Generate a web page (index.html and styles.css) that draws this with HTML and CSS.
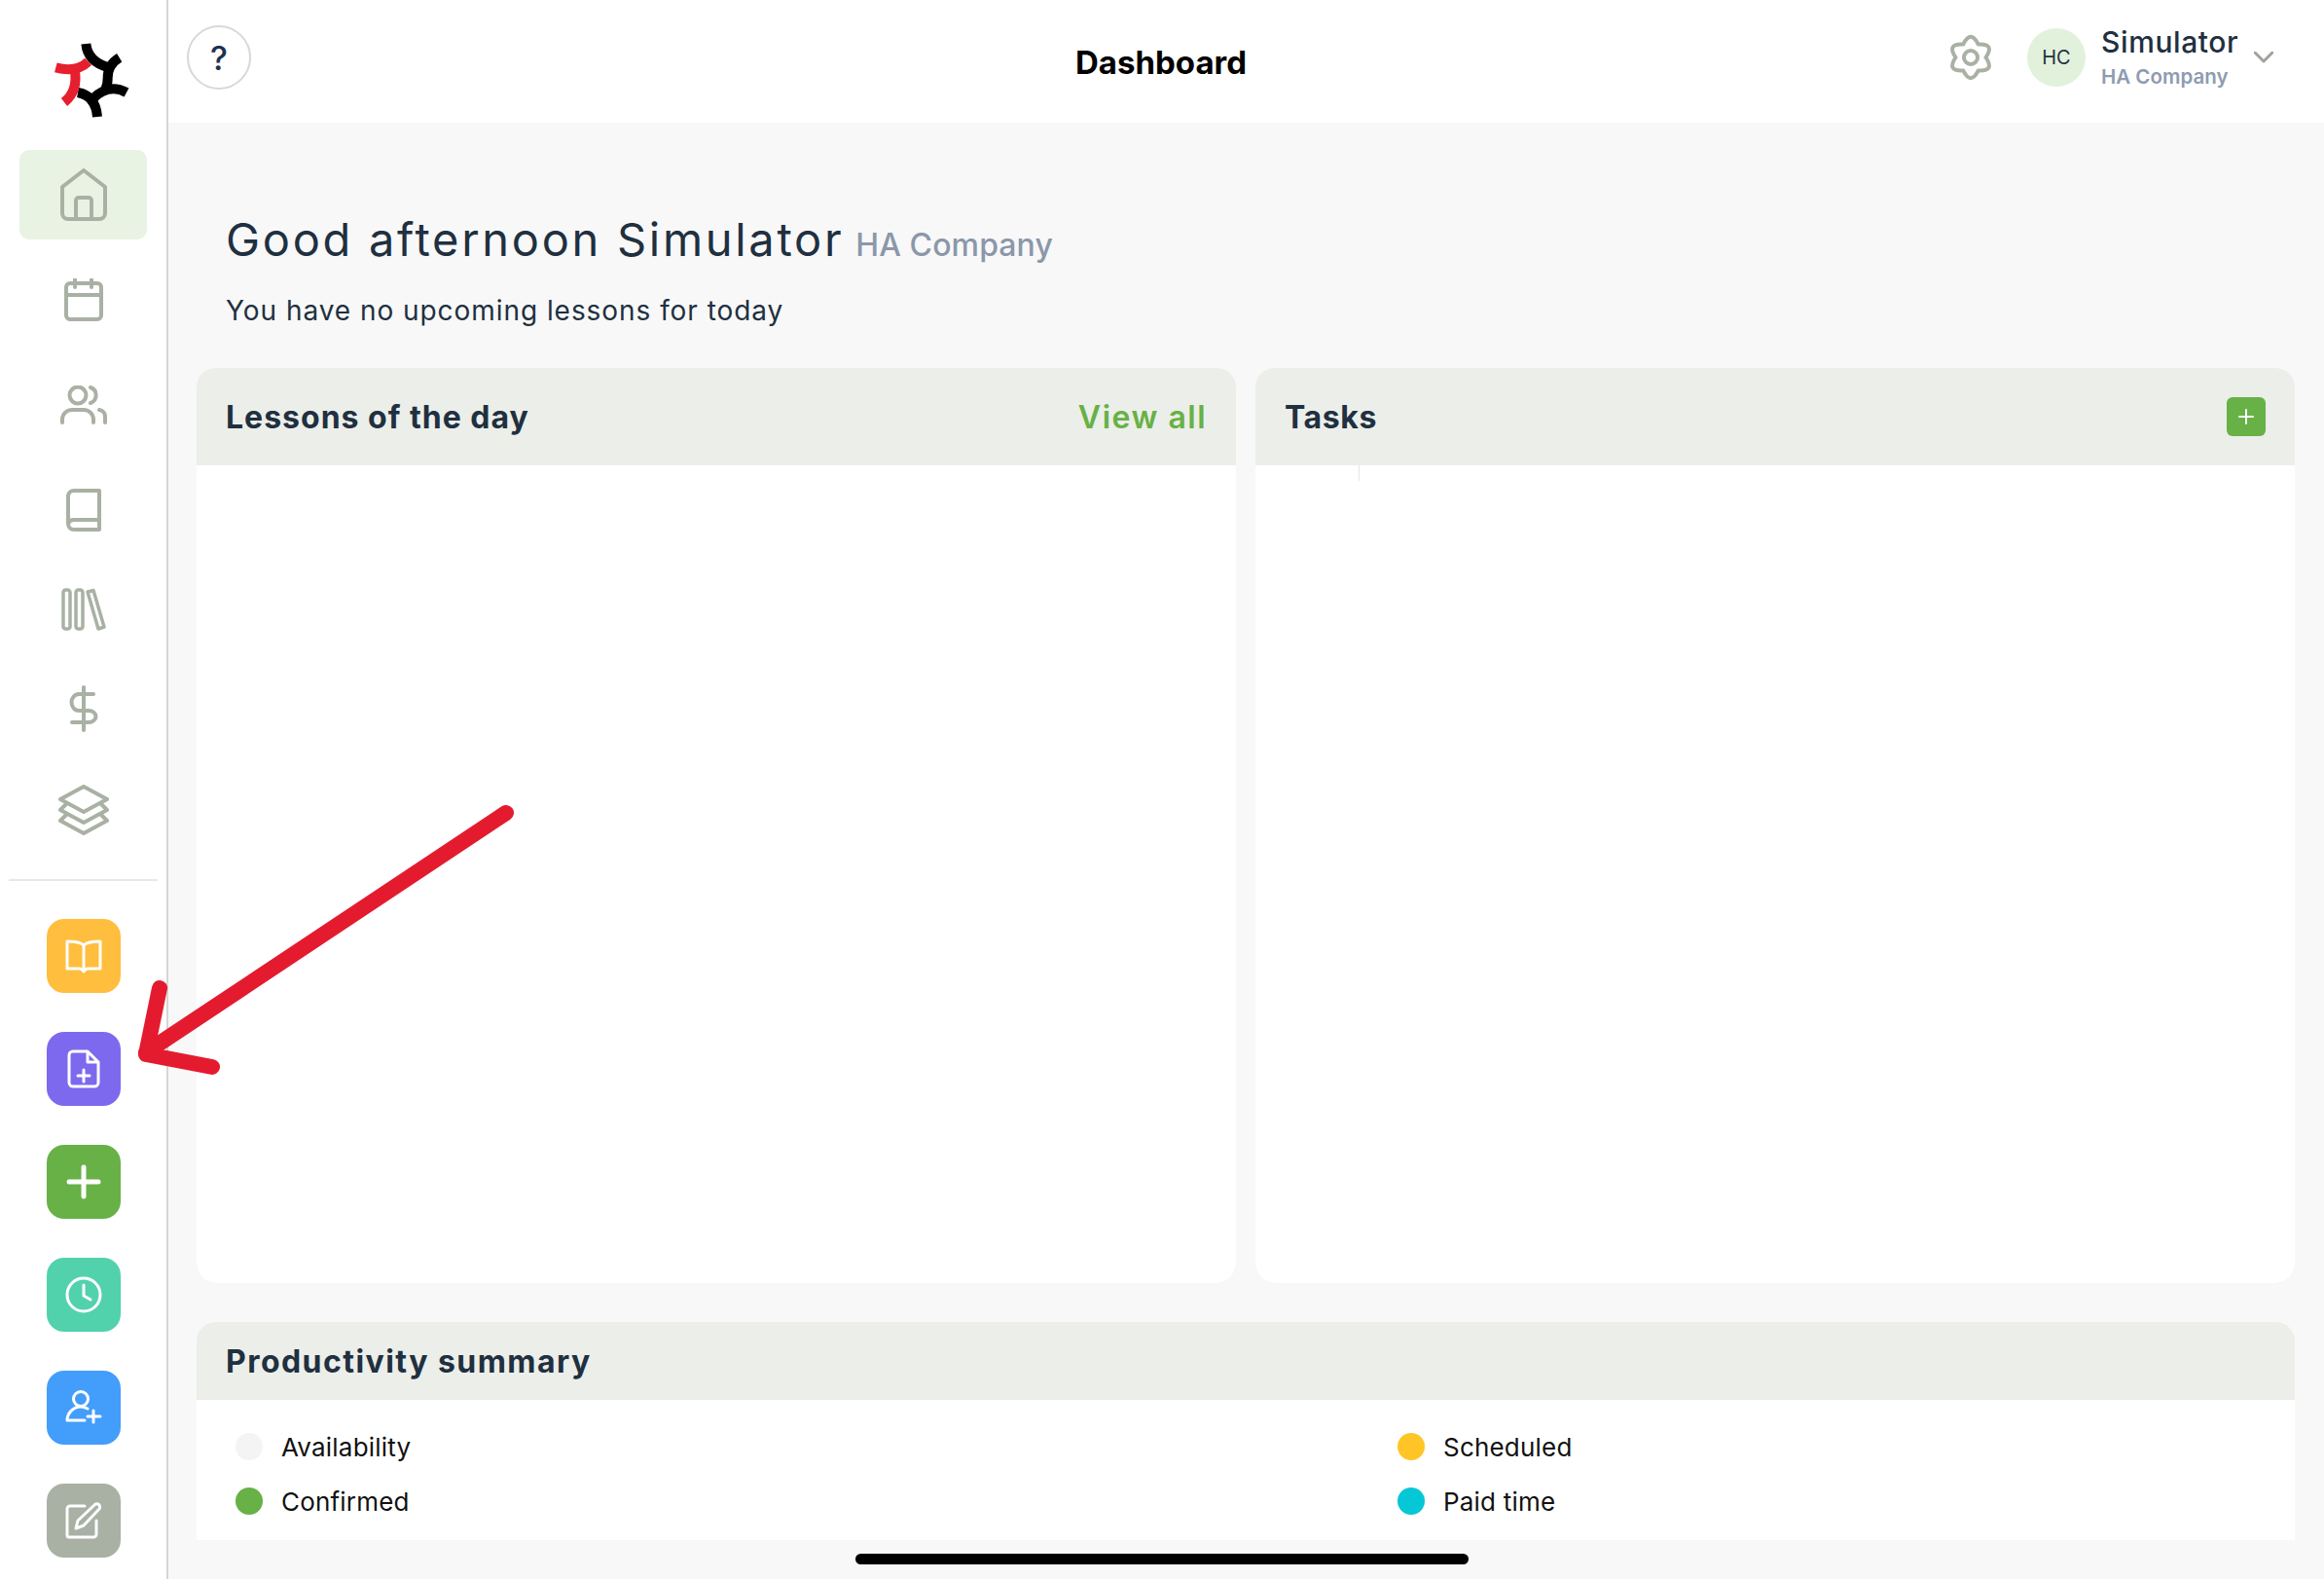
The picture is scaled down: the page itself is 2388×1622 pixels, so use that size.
FILE: index.html
```html
<!DOCTYPE html>
<html lang="en">
<head>
<meta charset="utf-8">
<title>Dashboard</title>
<link rel="stylesheet" href="styles.css">
</head>
<body>
<div class="app">
  <aside class="sidebar">
    <svg class="logo" width="110" height="100" viewBox="0 0 330 300" fill="none" stroke-width="30">
      <g stroke="#000">
        <path d="M145 45Q150 100 215 118"/>
        <path d="M248 88Q212 110 212 150Q212 172 205 185"/>
        <path d="M270 195Q215 165 165 215"/>
        <path d="M120 195Q175 205 180 270"/>
      </g>
      <g stroke="#e61e2e">
        <path d="M52 118Q115 135 152 100"/>
        <path d="M78 225Q122 190 110 125"/>
      </g>
    </svg>
    <nav class="nav">
      <a class="nav-item nav-item--active">
        <svg class="ico" width="48" height="54" viewBox="0 0 48 54"><path d="M2 19L24 2L46 19V46a6 6 0 0 1-6 6H8a6 6 0 0 1-6-6Z"/><path d="M16 52V33a3 3 0 0 1 3-3h10a3 3 0 0 1 3 3V52"/></svg>
      </a>
      <a class="nav-item">
        <svg class="ico" width="40" height="44" viewBox="0 0 40 44"><rect x="2" y="5" width="36" height="37" rx="4"/><path d="M2 17H38M11 1V9M28 1V9"/></svg>
      </a>
      <a class="nav-item">
        <svg class="ico" width="48" height="40" viewBox="0 0 48 40"><circle cx="18" cy="10" r="8.5"/><path d="M31 2a8.5 8.5 0 0 1 0 16"/><path d="M2 38V35a10 10 0 0 1 10-10H24a10 10 0 0 1 10 10v3"/><path d="M40 25a7 7 0 0 1 6 7v6"/></svg>
      </a>
      <a class="nav-item nav-item--tight">
        <svg class="ico" width="36" height="44" viewBox="0 0 36 44"><path d="M2 36V8a6 6 0 0 1 6-6H34V42H8a6 6 0 0 1-6-6a6 6 0 0 1 6-4H34"/></svg>
      </a>
      <a class="nav-item nav-item--tight">
        <svg class="ico ico--thin" width="46" height="44" viewBox="0 0 46 44"><rect x="2" y="2" width="7" height="40" rx="2.5"/><rect x="15" y="2" width="7" height="40" rx="2.5"/><path d="M27 4L33 2.500L44 40L38 42Z"/></svg>
      </a>
      <a class="nav-item nav-item--dollar">
        <svg class="ico" width="30" height="48" viewBox="0 0 30 48"><path d="M15 2V46"/><path d="M25 9H10a7.500 8.500 0 0 0 0 17H20a7.500 6 0 0 1 0 12H3"/></svg>
      </a>
      <a class="nav-item nav-item--last">
        <svg class="ico" width="52" height="52" viewBox="0 0 52 52"><path d="M26 2L50 15L26 28L2 15Z"/><path d="M8 20L2 26L26 39L50 26L44 20"/><path d="M8 31L2 37L26 50L50 37L44 31"/></svg>
      </a>
    </nav>
    <div class="side-divider"></div>
    <div class="actions">
      <a class="action action--yellow">
        <svg class="ico-w" width="40" height="40" viewBox="0 0 40 40"><path d="M20 9C17 6 10 5 3 5V33H15C18 33 19 34 20 36C21 34 22 33 25 33H37V5C30 5 23 6 20 9ZM20 9V35"/></svg>
      </a>
      <a class="action action--purple">
        <svg class="ico-w" width="40" height="40" viewBox="0 0 40 40"><path d="M24 2H9a4 4 0 0 0-4 4V34a4 4 0 0 0 4 4H31a4 4 0 0 0 4-4V13ZM24 2V13H35"/><path d="M20 21V33M14 27H26"/></svg>
      </a>
      <a class="action action--green">
        <svg class="ico-b" width="40" height="40" viewBox="0 0 40 40"><path d="M20 5V35M5 20H35"/></svg>
      </a>
      <a class="action action--teal">
        <svg class="ico-w" width="40" height="40" viewBox="0 0 40 40"><circle cx="20" cy="20" r="17"/><path d="M20 10V21L27 25"/></svg>
      </a>
      <a class="action action--blue">
        <svg class="ico-w" width="40" height="40" viewBox="0 0 40 40"><circle cx="17" cy="11" r="7.500"/><path d="M3 33C3 26 9 19 17 19C20 19 22 20 24 21M3 33H21M30 23V35M24 29H37"/></svg>
      </a>
      <a class="action action--gray">
        <svg class="ico-w" width="40" height="40" viewBox="0 0 40 40"><path d="M21 5H6a3 3 0 0 0-3 3V35a2 2 0 0 0 2 2H30a3 3 0 0 0 3-3V20"/><path d="M12 28L14 20L31 4a3 3 0 0 1 5 4L20 25Z"/></svg>
      </a>
    </div>
  </aside>

  <div class="main">
    <header class="topbar">
      <button class="help">?</button>
      <h2 class="page-title">Dashboard</h2>
      <div class="top-right">
        <svg class="ico gear" width="44" height="48" viewBox="0 0 44 48"><path d="M14.250 10.600Q22 -5 29.750 10.600Q47.100 9.500 37.500 24Q47.100 38.500 29.750 37.400Q22 53 14.250 37.400Q-3.100 38.500 6.500 24Q-3.100 9.500 14.250 10.600Z"/><circle cx="22" cy="24" r="7"/></svg>
        <div class="avatar">HC</div>
        <div class="user">
          <div class="user-name">Simulator</div>
          <div class="user-company">HA Company</div>
        </div>
        <svg class="chevron" width="20" height="12" viewBox="0 0 20 12"><path d="M1 1L10 10L19 1"/></svg>
      </div>
    </header>

    <section class="content">
      <div class="greeting">
        <h1 class="greeting-title">Good afternoon Simulator <span class="greeting-company">HA Company</span></h1>
        <p class="greeting-sub">You have no upcoming lessons for today</p>
      </div>

      <div class="panels">
        <div class="panel">
          <div class="panel-head">
            <span class="panel-title">Lessons of the day</span>
            <a class="view-all">View all</a>
          </div>
          <div class="panel-body"></div>
        </div>
        <div class="panel">
          <div class="panel-head">
            <span class="panel-title panel-title--short">Tasks</span>
            <a class="add-btn"><svg class="ico-add" width="18" height="18" viewBox="0 0 18 18"><path d="M9 2V16M2 9H16"/></svg></a>
          </div>
          <div class="panel-body"><div class="tick"></div></div>
        </div>
      </div>

      <div class="summary">
        <div class="summary-head"><span class="panel-title panel-title--wide">Productivity summary</span></div>
        <div class="legend">
          <div class="legend-item"><span class="dot dot--avail"></span>Availability</div>
          <div class="legend-item"><span class="dot dot--sched"></span>Scheduled</div>
          <div class="legend-item"><span class="dot dot--conf"></span>Confirmed</div>
          <div class="legend-item"><span class="dot dot--paid"></span>Paid time</div>
        </div>
      </div>
    </section>
  </div>
</div>

<svg class="arrow" width="2388" height="1622" viewBox="0 0 2388 1622" fill="none"><path d="M520 835L150 1081"/><path d="M164 1015L150 1083L218 1096"/></svg>
<div class="home-bar"></div>
</body>
</html>
```
FILE: styles.css
```css
* { box-sizing: border-box; }
html, body { margin: 0; height: 100%; }
body {
  font-family: Inter, "Noto Sans", sans-serif;
  color: #1f3040;
  background: #f8f8f8;
  overflow: hidden;
}
.app { display: flex; height: 1622px; }

/* sidebar */
.sidebar {
  flex: 0 0 173px;
  background: #fff;
  border-right: 2px solid #d6d6d6;
  display: flex;
  flex-direction: column;
  padding-top: 30px;
}
.logo { margin-left: 40px; flex: none; }
.nav { display: flex; flex-direction: column; margin-top: 24px; }
.nav-item {
  width: 131px;
  height: 92px;
  margin-left: 20px;
  margin-bottom: 16px;
  border-radius: 10px;
  display: flex;
  align-items: center;
  justify-content: center;
}
.nav-item--tight { margin-bottom: 10px; }
.nav-item--dollar { margin-bottom: 12px; }
.nav-item--last { margin-bottom: 0; }
.nav-item--active { background: #e8f3e4; }
.ico { fill: none; stroke: #a9b1a4; stroke-width: 4; stroke-linecap: round; stroke-linejoin: round; }
.ico--thin { stroke-width: 3.5; }
.side-divider {
  height: 2px;
  margin: 25px 9px 0;
  width: 153px;
  background: #e8e8e8;
}
.actions { display: flex; flex-direction: column; gap: 40px; margin-top: 39px; margin-left: 48px; }
.action {
  width: 76px;
  height: 76px;
  border-radius: 18px;
  display: flex;
  align-items: center;
  justify-content: center;
}
.action--yellow { background: #ffbe3d; }
.action--purple { background: #7d69ee; }
.action--green { background: #67b146; }
.action--teal { background: #52d1ad; }
.action--blue { background: #439dfb; }
.action--gray { background: #a9b0a4; }
.ico-w { fill: none; stroke: #fff; stroke-width: 3; stroke-linecap: round; stroke-linejoin: round; }
.ico-b { fill: none; stroke: #fff; stroke-width: 5; stroke-linecap: round; }

/* main */
.main { flex: 1; min-width: 0; display: flex; flex-direction: column; }
.topbar {
  position: relative;
  height: 126px;
  background: #fff;
  display: flex;
  align-items: flex-start;
  justify-content: space-between;
  padding: 26px 0 0 19px;
}
.help {
  width: 66px;
  height: 66px;
  border-radius: 50%;
  border: 2px solid #d8d8d8;
  background: #fff;
  color: #1f3050;
  font: 500 34px Inter, sans-serif;
  padding: 0;
}
.page-title {
  position: absolute;
  left: 0;
  right: 175px;
  top: 42px;
  margin: 0;
  text-align: center;
  font-size: 33px;
  line-height: 44px;
  font-weight: 700;
  color: #000;
}
.top-right { display: flex; align-items: center; margin-top: -1px; padding-right: 52px; }
.gear { margin-right: 36px; }
.avatar {
  width: 60px;
  height: 60px;
  border-radius: 50%;
  background: #e2f1dc;
  color: #24323f;
  display: flex;
  align-items: center;
  justify-content: center;
  font-size: 20px;
  margin-right: 16px;
}
.user { width: 157px; }
.user-name { font-size: 30px; line-height: 36px; font-weight: 500; letter-spacing: 0.6px; color: #1f3040; }
.user-company { font-size: 20.5px; line-height: 26px; font-weight: 600; color: #8e9bb0; margin-top: 5px; }
.chevron { fill: none; stroke: #a0a39c; stroke-width: 3; stroke-linecap: round; stroke-linejoin: round; }

.content { padding: 0 30px 0 29px; }
.greeting { padding: 90px 0 0 30px; }
.greeting-title { margin: 0; font-size: 47px; line-height: 60px; font-weight: 400; letter-spacing: 2.7px; color: #1f3040; }
.greeting-company { margin-left: -4px; font-size: 32px; line-height: 1; font-weight: 500; letter-spacing: 0.1px; color: #8b97aa; }
.greeting-sub { margin: 25px 0 0; font-size: 28px; line-height: 36px; letter-spacing: 0.95px; color: #1f3040; }

.panels { display: flex; gap: 20px; margin-top: 41px; height: 940px; }
.panel {
  flex: 1;
  min-width: 0;
  display: flex;
  flex-direction: column;
  background: #eceee9;
  border-radius: 20px;
  overflow: hidden;
}
.panel-head {
  flex: 0 0 100px;
  display: flex;
  align-items: center;
  justify-content: space-between;
  padding: 0 30px;
}
.panel-title { font-size: 32px; font-weight: 700; letter-spacing: 1px; color: #1f3040; }
.panel-title--short { letter-spacing: 0.6px; }
.panel-title--wide { letter-spacing: 1.45px; }
.view-all { font-size: 32px; font-weight: 600; letter-spacing: 1.5px; color: #67b146; }
.add-btn {
  width: 40px;
  height: 40px;
  border-radius: 6px;
  background: #67b146;
  display: flex;
  align-items: center;
  justify-content: center;
}
.ico-add { fill: none; stroke: #fff; stroke-width: 2; stroke-linecap: round; }
.panel-body {
  flex: 1;
  background: #fff;
  border-radius: 0 0 20px 20px;
  padding-left: 106px;
}
.tick { width: 1px; height: 16px; background: #e6e6e6; }

.summary { margin-top: 40px; }
.summary-head {
  height: 80px;
  background: #eceee9;
  border-radius: 20px 20px 0 0;
  display: flex;
  align-items: center;
  padding: 0 30px;
}
.legend {
  height: 144px;
  background: #fff;
  display: grid;
  grid-template-columns: 1194px 1fr;
  grid-auto-rows: 56px;
  padding: 34px 0 0 40px;
}
.legend-item { display: flex; align-items: flex-start; font-size: 26px; line-height: 30px; letter-spacing: 0.2px; color: #111; }
.dot { width: 28px; height: 28px; border-radius: 50%; margin-right: 19px; flex: none; }
.dot--avail { background: #f4f4f4; }
.dot--sched { background: #ffc526; }
.dot--conf { background: #67b146; }
.dot--paid { background: #06c7d6; }

/* overlays */
.arrow {
  position: absolute;
  left: 0;
  top: 0;
  stroke: #e41b2f;
  stroke-width: 16;
  stroke-linecap: round;
  stroke-linejoin: round;
  pointer-events: none;
}
.home-bar {
  position: absolute;
  left: 879px;
  top: 1596px;
  width: 630px;
  height: 11px;
  border-radius: 6px;
  background: #000;
}
```
